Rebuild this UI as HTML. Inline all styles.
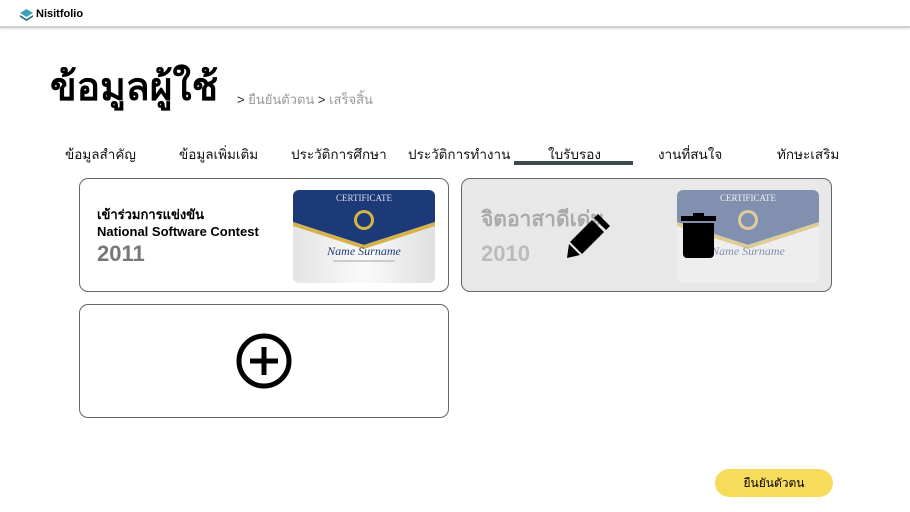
<!DOCTYPE html>
<html><head><meta charset="utf-8"><style>
*{margin:0;padding:0;box-sizing:border-box}
body{width:910px;height:512px;background:#fff;font-family:"Liberation Sans","Noto Sans CJK SC",sans-serif;position:relative;overflow:hidden}
.abs{position:absolute}
.hdr{left:0;top:0;width:910px;height:28px;border-bottom:2px solid #cfcfcf;box-shadow:0 1px 2px #ddd}
.tab{top:143px;font-size:13.5px;color:#111;white-space:nowrap}
.card{border:1px solid #666;border-radius:9px;background:#fff}
.cert{width:142px;height:93px;border-radius:6px;overflow:hidden;background:#f6f6f6}
</style></head><body>
<div class="abs hdr"></div>
<svg class="abs" style="left:19px;top:8px" width="15" height="13" viewBox="0 0 15 13"><path d="M7.5 1L14 5 7.5 9 1 5Z" fill="#3aa0b8"/><path d="M1 7l6.5 4 6.5-4v2l-6.5 4L1 9Z" fill="#2b6f86"/></svg>
<div class="abs" style="left:36px;top:8px;font-size:11px;font-weight:bold">Nisitfolio</div>
<div class="abs" style="left:50px;top:62px;font-size:39px;font-weight:bold;line-height:52px">ข้อมูลผู้ใช้</div>
<div class="abs" style="left:237px;top:89px;font-size:13px;color:#999"><span style="color:#222">&gt;</span> ยืนยันตัวตน <span style="color:#222">&gt;</span> เสร็จสิ้น</div>
<div class="abs tab" style="left:65px">ข้อมูลสำคัญ</div>
<div class="abs tab" style="left:179px">ข้อมูลเพิ่มเติม</div>
<div class="abs tab" style="left:291px">ประวัติการศึกษา</div>
<div class="abs tab" style="left:408px">ประวัติการทำงาน</div>
<div class="abs tab" style="left:548px">ใบรับรอง</div>
<div class="abs tab" style="left:658px">งานที่สนใจ</div>
<div class="abs tab" style="left:777px">ทักษะเสริม</div>
<div class="abs" style="left:514px;top:161px;width:119px;height:4px;background:#3f4a4f"></div>

<div class="abs card" style="left:79px;top:178px;width:370px;height:114px"></div>
<div class="abs" style="left:97px;top:206px;font-size:13px;font-weight:bold;line-height:17px">เข้าร่วมการแข่งขัน<br>National Software Contest</div>
<div class="abs" style="left:97px;top:241px;font-size:22px;font-weight:bold;color:#777">2011</div>
<div class="abs cert" style="left:293px;top:190px">
<svg width="142" height="93" viewBox="0 0 142 93"><defs><linearGradient id="g" x1="0" y1="0" x2="1" y2="0"><stop offset="0" stop-color="#e4e4e4"/><stop offset=".5" stop-color="#fafafa"/><stop offset="1" stop-color="#e0e0e0"/></linearGradient></defs><rect width="142" height="93" fill="url(#g)"/><path d="M0 0h142v32L71 55 0 32Z" fill="#1c3a78"/><path d="M0 32l71 23 71-23v4L71 59 0 36Z" fill="#d6b34a"/><circle cx="71" cy="30" r="10" fill="#d6b34a"/><circle cx="71" cy="30" r="7" fill="#1c3a78"/><text x="71" y="11" font-size="9" fill="#dde" text-anchor="middle" font-family="Liberation Serif">CERTIFICATE</text><text x="71" y="65" font-size="12" fill="#1c3a78" text-anchor="middle" font-style="italic" font-family="Liberation Serif">Name Surname</text><rect x="40" y="70" width="62" height="2" fill="#ccc"/></svg></div>

<div class="abs card" style="left:461px;top:178px;width:371px;height:114px;background:#e8e8e8"></div>
<div class="abs" style="left:481px;top:203px;font-size:21px;font-weight:bold;color:#aaa">จิตอาสาดีเด่น</div>
<div class="abs" style="left:481px;top:241px;font-size:22px;font-weight:bold;color:#bbb">2010</div>
<div class="abs cert" style="left:677px;top:190px;opacity:.5">
<svg width="142" height="93" viewBox="0 0 142 93"><rect width="142" height="93" fill="#f4f4f4"/><path d="M0 0h142v32L71 55 0 32Z" fill="#1c3a78"/><path d="M0 32l71 23 71-23v4L71 59 0 36Z" fill="#d6b34a"/><circle cx="71" cy="30" r="10" fill="#d6b34a"/><circle cx="71" cy="30" r="7" fill="#1c3a78"/><text x="71" y="11" font-size="9" fill="#fff" text-anchor="middle" font-family="Liberation Serif">CERTIFICATE</text><text x="71" y="65" font-size="12" fill="#1c3a78" text-anchor="middle" font-style="italic" font-family="Liberation Serif">Name Surname</text></svg></div>
<svg class="abs" style="left:566px;top:212px" width="46" height="46" viewBox="0 0 46 46"><path d="M32 2l12 12-4 4-12-12Z M26 8l12 12-22 22-12-12Z M3 32l11 11-13 3Z" fill="#000"/></svg>
<svg class="abs" style="left:681px;top:213px" width="35" height="45" viewBox="0 0 35 45"><rect x="0" y="3" width="35" height="5" fill="#000"/><rect x="12" y="0" width="11" height="4" fill="#000"/><path d="M2 10h31v31a4 4 0 0 1-4 4H6a4 4 0 0 1-4-4Z" fill="#000"/></svg>

<div class="abs card" style="left:79px;top:304px;width:370px;height:114px"></div>
<svg class="abs" style="left:235px;top:332px" width="58" height="58" viewBox="0 0 58 58"><circle cx="29" cy="29" r="25" fill="none" stroke="#000" stroke-width="5"/><path d="M29 15v28M15 29h28" stroke="#000" stroke-width="5"/></svg>

<div class="abs" style="left:715px;top:469px;width:118px;height:28px;border-radius:14px;background:#f7dc5c;font-size:12px;text-align:center;line-height:28px">ยืนยันตัวตน</div>
</body></html>
